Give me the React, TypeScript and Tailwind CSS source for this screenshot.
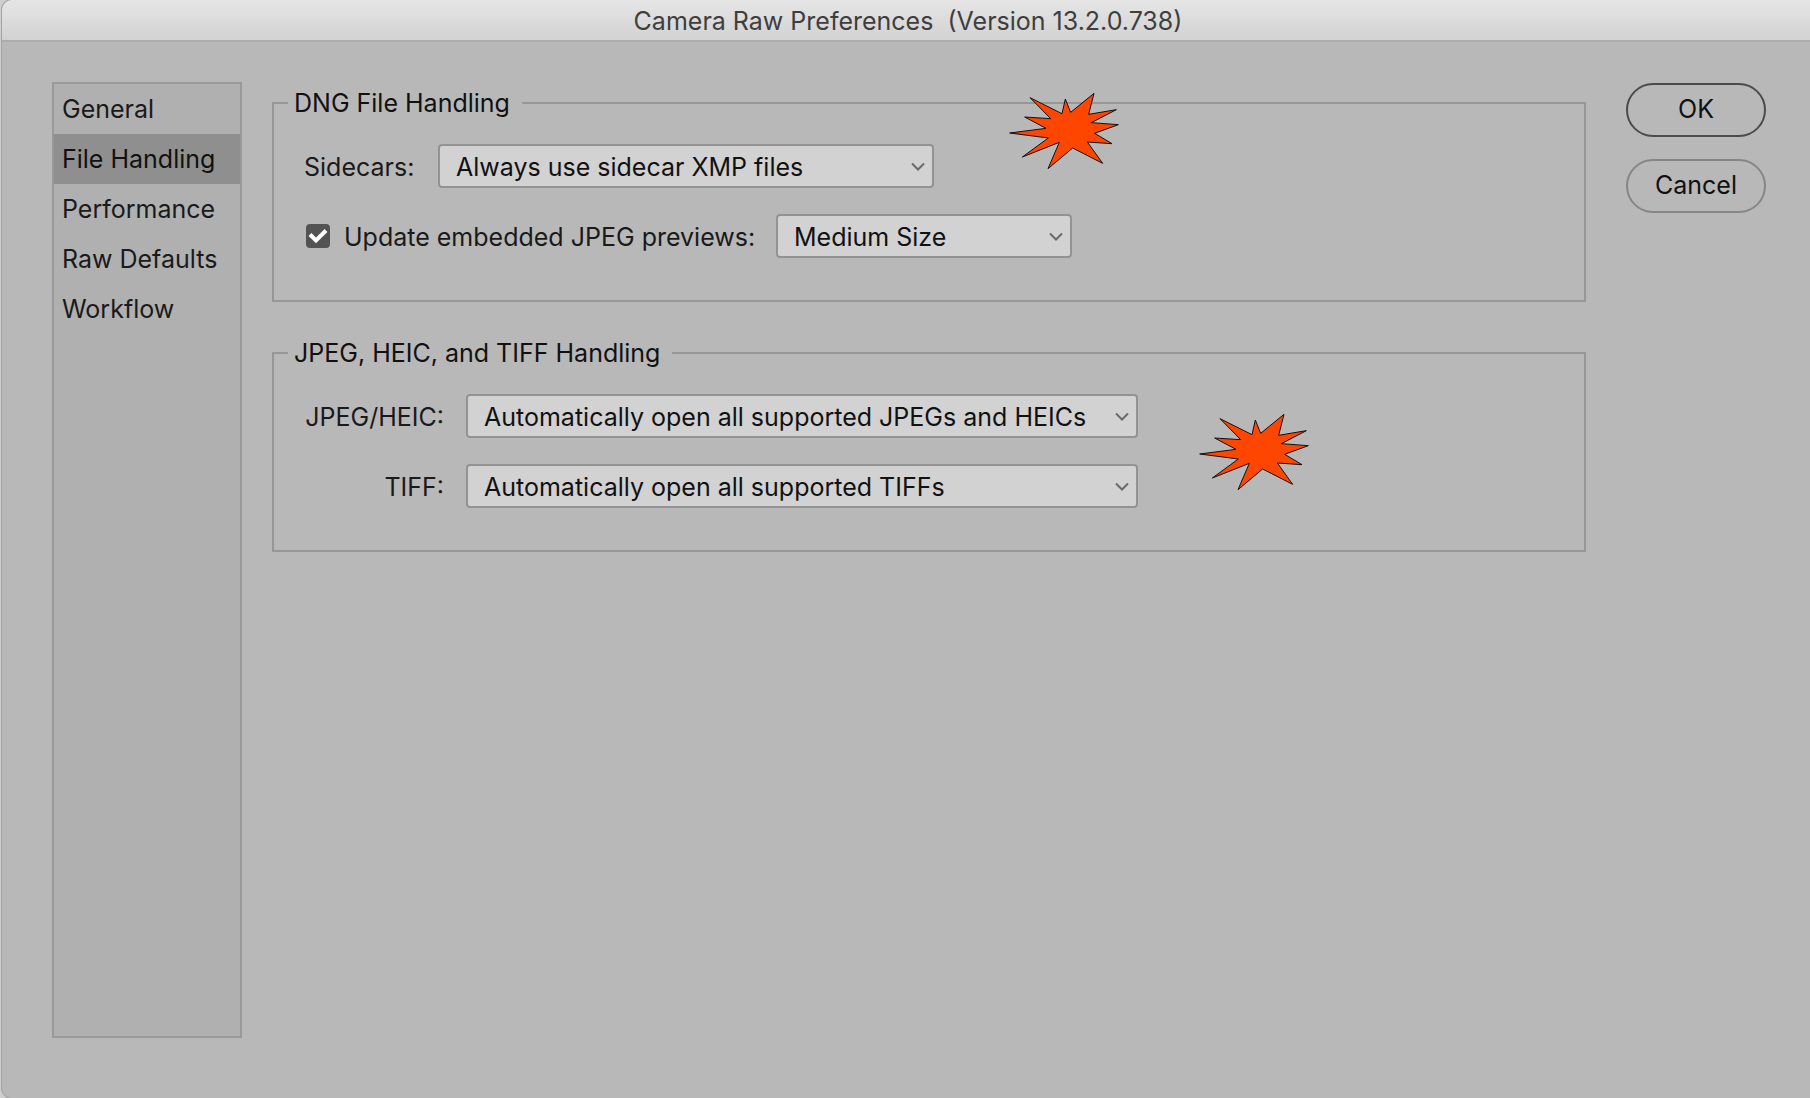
import React, { useState } from 'react';

const sections = ['General', 'File Handling', 'Performance', 'Raw Defaults', 'Workflow'];

function Select({ id, options, className }: { id: string; options: string[]; className?: string }) {
  return (
    <div className={`relative ${className}`}>
      <select
        id={id}
        className="block h-11 w-full appearance-none rounded-sm border-2 border-[#939393] bg-[#d2d2d2] pl-4 pr-8 pt-0.5 text-[#111]"
      >
        {options.map((option) => (
          <option key={option}>{option}</option>
        ))}
      </select>
      <svg
        className="pointer-events-none absolute right-2 top-4 h-3 w-4"
        viewBox="0 0 16 12"
        fill="none"
        stroke="#6a6a6a"
        strokeWidth="2"
        aria-hidden="true"
      >
        <path d="M2 3.5 8 9.5 14 3.5" />
      </svg>
    </div>
  );
}

function Group({ title, children }: { title: string; children: React.ReactNode }) {
  return (
    <fieldset className="border-2 border-[#979797] px-3.5 pb-[42px]">
      <legend className="pl-1.5 pr-3 text-[#111]">{title}</legend>
      <div className="flex flex-col gap-[26px] pl-4 pt-[26px]">{children}</div>
    </fieldset>
  );
}

// Marks a setting worth looking at
function Burst({ className }: { className: string }) {
  return (
    <svg
      className={`pointer-events-none absolute h-[79px] w-[114px] ${className}`}
      viewBox="48 33 342 237"
      fill="#ff4600"
      stroke="#111"
      strokeWidth="3"
      aria-hidden="true"
    >
      <polygon points="59,159 168,145 104,111 182,116 120,53 216,101 226,57 242,97 312,40 296,103 379,89 304,128 385,134 314,160 366,191 292,186 338,250 248,204 174,266 208,187 97,231 175,174" />
    </svg>
  );
}

export default function App() {
  const [active, setActive] = useState('File Handling');
  const [update, setUpdate] = useState(true);

  return (
    <div className="flex min-h-screen bg-[#cfcfcf] pl-0.5 font-['Inter','Liberation_Sans',sans-serif] text-[25px] leading-[30px] text-[#1a1a1a]">
      <div className="flex flex-1 flex-col overflow-hidden rounded-l-[10px] bg-[#b8b8b8] shadow-[0_0_0_1px_#a4a4a4]">
        <header className="flex h-[42px] items-center justify-center border-b-2 border-[#acacac] bg-linear-to-b from-[#e6e6e6] to-[#d2d2d2] pl-1 pt-0.5">
          <h1 className="whitespace-pre text-[#3e3e3e]">{'Camera Raw Preferences  (Version 13.2.0.738)'}</h1>
        </header>

        <div className="flex flex-1 pb-[60px] pl-[50px] pr-11">
          <nav className="mt-10 w-[190px] shrink-0 border-2 border-[#999] bg-[#b0b0b0]">
            {sections.map((section) => (
              <button
                key={section}
                type="button"
                onClick={() => setActive(section)}
                className={`block h-[50px] w-full whitespace-nowrap pl-2 text-left ${active === section ? 'bg-[#8f8f8f] text-[#111]' : ''}`}
              >
                {section}
              </button>
            ))}
          </nav>

          <main className="ml-[30px] mt-[46px] flex flex-1 flex-col gap-9">
            <div className="relative">
              <Group title="DNG File Handling">
                <div className="flex items-center gap-[22px]">
                  <label htmlFor="sidecars" className="w-28 whitespace-nowrap pt-0.5">Sidecars:</label>
                  <Select
                    id="sidecars"
                    className="w-[496px]"
                    options={['Always use sidecar XMP files', 'Ignore sidecar XMP files']}
                  />
                </div>
                <div className="flex items-center gap-3.5">
                  <span className="relative ml-0.5 h-6 w-6">
                    <input
                      id="update-previews"
                      type="checkbox"
                      checked={update}
                      onChange={(e) => setUpdate(e.target.checked)}
                      className="block h-6 w-6 appearance-none rounded-sm border-2 border-[#535353] checked:bg-[#535353]"
                    />
                    {update && (
                      <svg
                        className="pointer-events-none absolute inset-0 h-6 w-6"
                        viewBox="0 0 24 24"
                        fill="none"
                        stroke="#fff"
                        strokeWidth="4"
                        aria-hidden="true"
                      >
                        <path d="M4 10.5 10 16.5 20 6.5" />
                      </svg>
                    )}
                  </span>
                  <label htmlFor="update-previews" className="w-[418px] whitespace-nowrap pt-0.5">
                    Update embedded JPEG previews:
                  </label>
                  <Select id="preview-size" className="w-[296px]" options={['Medium Size', 'Full Size']} />
                </div>
              </Group>
              <Burst className="left-[734px] top-[3px]" />
            </div>

            <div className="relative">
              <Group title="JPEG, HEIC, and TIFF Handling">
                <div className="flex items-center gap-[22px]">
                  <label htmlFor="jpeg" className="w-[140px] whitespace-nowrap pt-0.5 text-right">JPEG/HEIC:</label>
                  <Select
                    id="jpeg"
                    className="w-[672px]"
                    options={['Automatically open all supported JPEGs and HEICs', 'Disable JPEG and HEIC support']}
                  />
                </div>
                <div className="flex items-center gap-[22px]">
                  <label htmlFor="tiff" className="w-[140px] whitespace-nowrap pt-0.5 text-right">TIFF:</label>
                  <Select
                    id="tiff"
                    className="w-[672px]"
                    options={['Automatically open all supported TIFFs', 'Disable TIFF support']}
                  />
                </div>
              </Group>
              <Burst className="left-[924px] top-[74px]" />
            </div>
          </main>

          <div className="ml-10 mt-[41px] flex w-[140px] shrink-0 flex-col gap-[22px]">
            <button type="button" className="h-[54px] rounded-full border-2 border-[#4b4b4b] pb-0.5 text-[#111]">
              OK
            </button>
            <button type="button" className="h-[54px] rounded-full border-2 border-[#868686] pb-0.5 text-[#111]">
              Cancel
            </button>
          </div>
        </div>
      </div>
    </div>
  );
}
